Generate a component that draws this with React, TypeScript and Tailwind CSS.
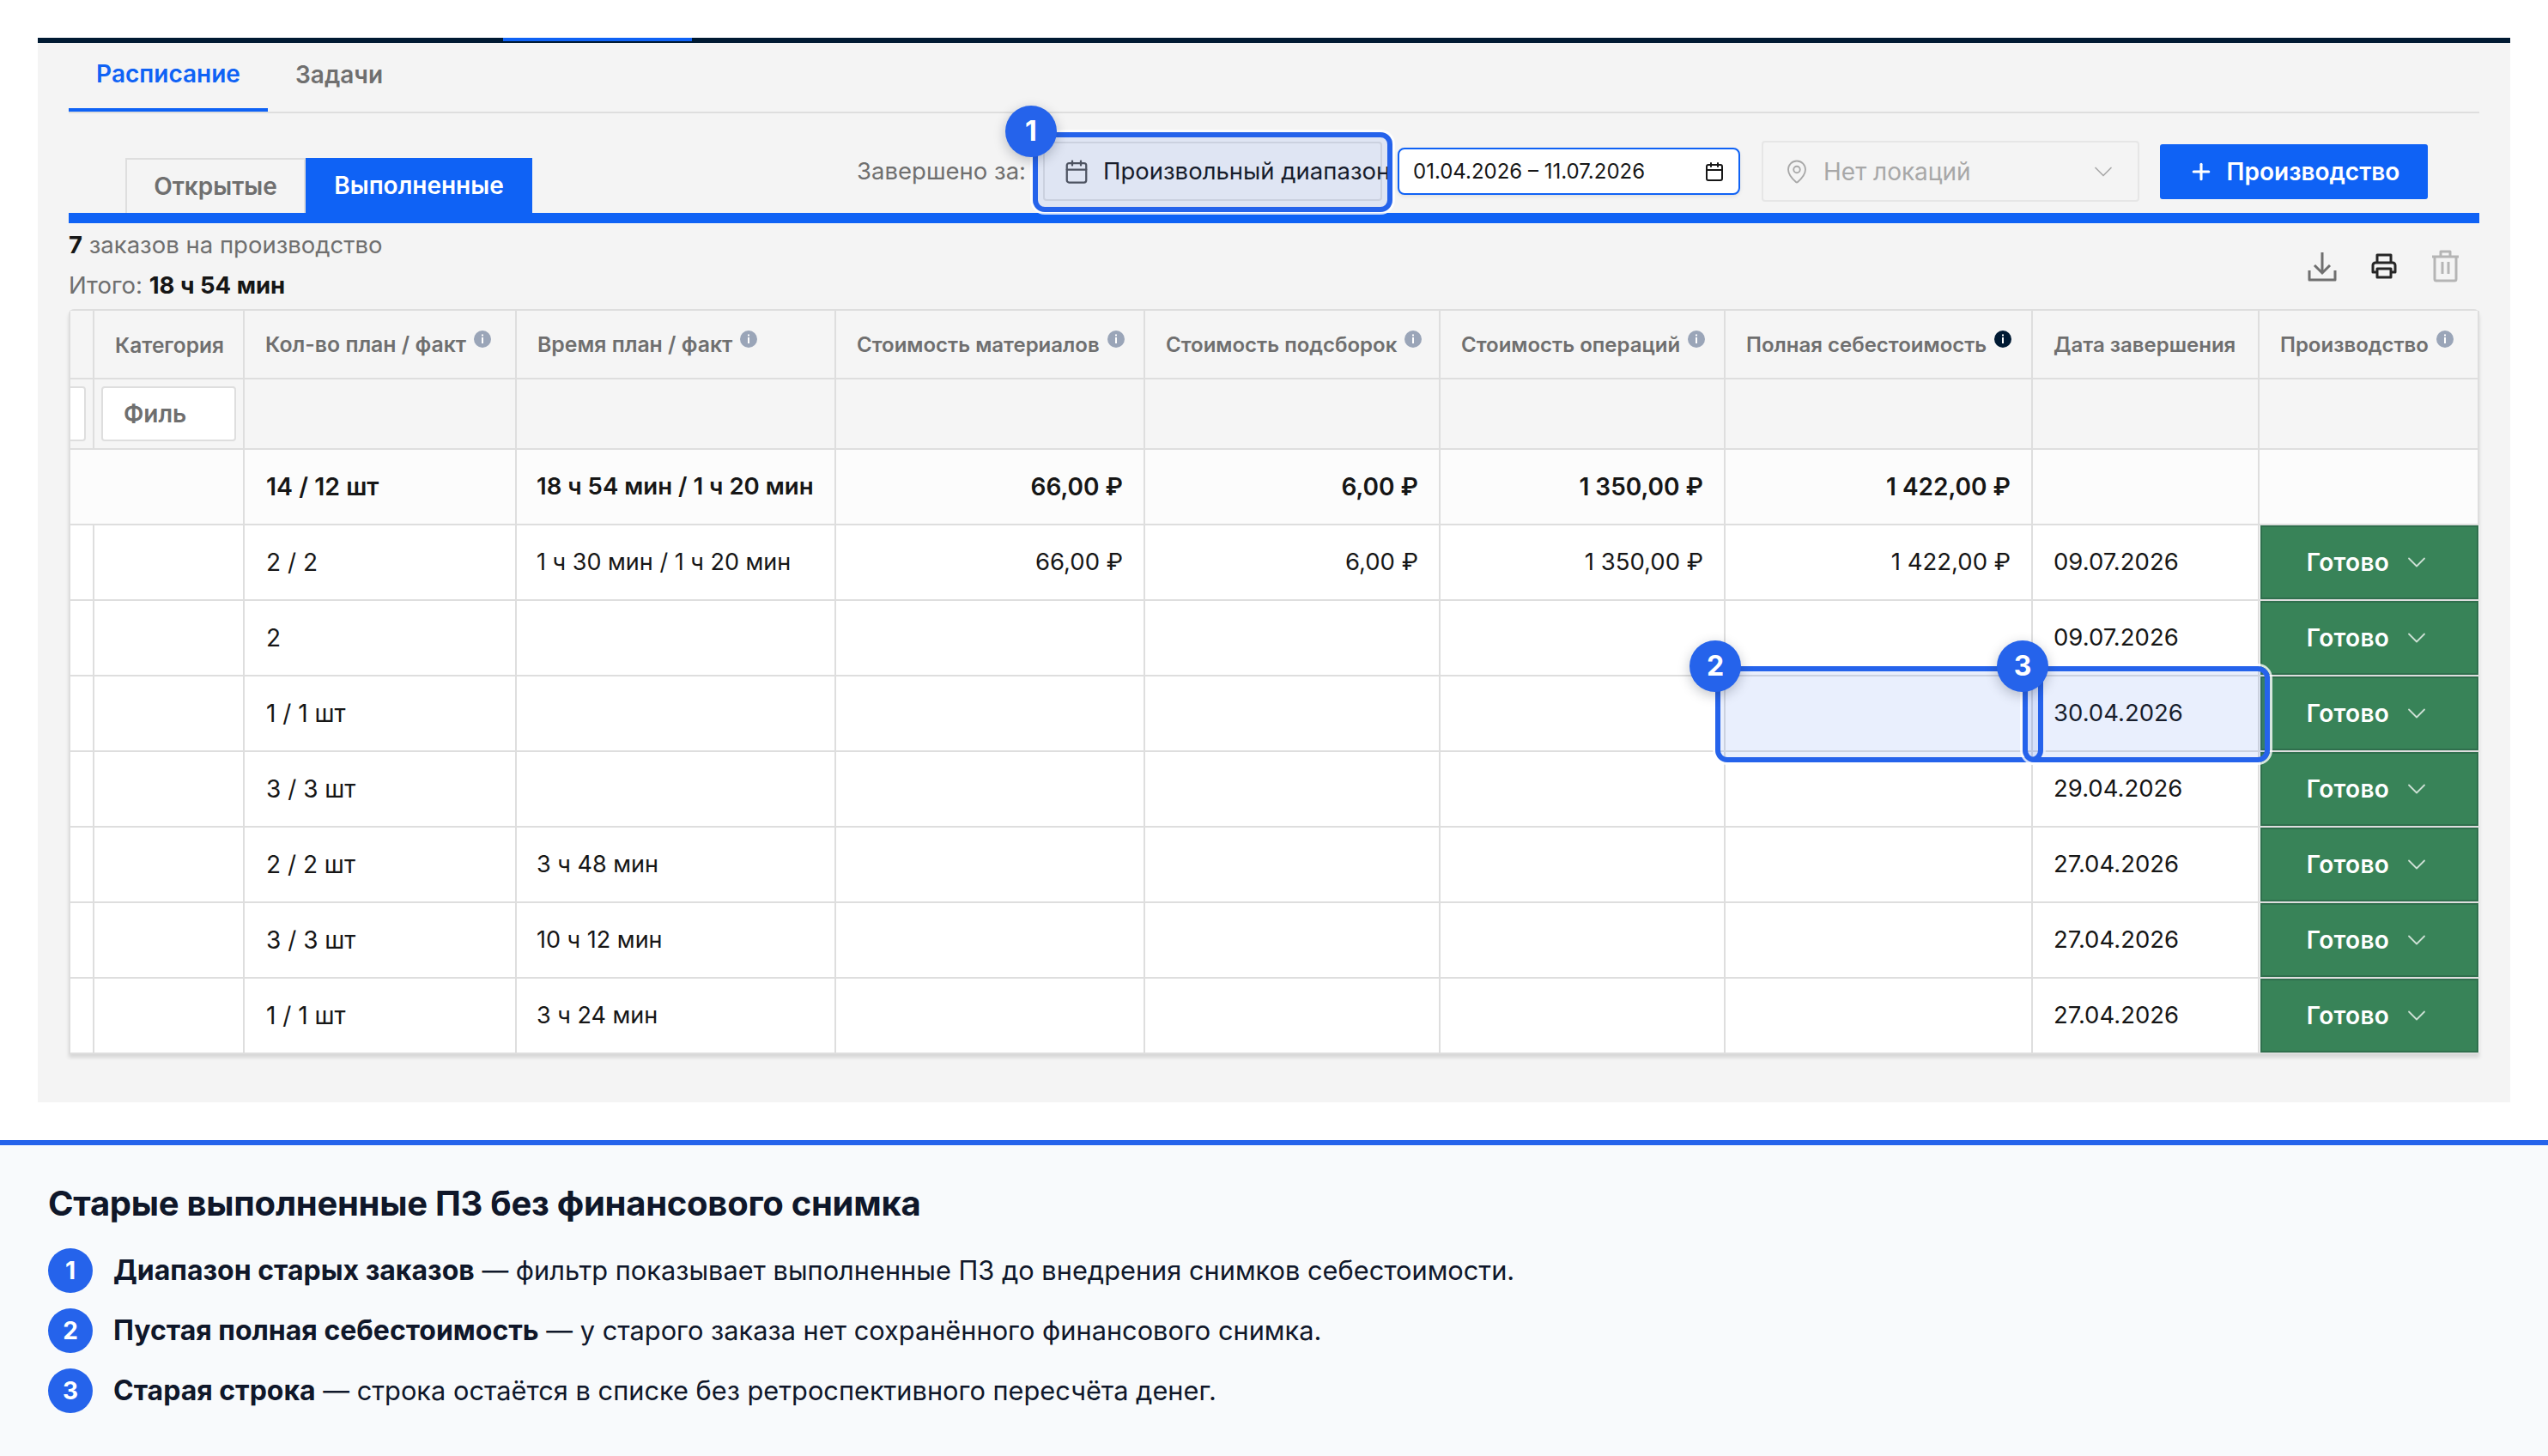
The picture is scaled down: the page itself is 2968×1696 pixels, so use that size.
import React from 'react';
import { Calendar, MapPin, ChevronDown, Plus } from 'lucide-react';

const gridCols = 'grid grid-cols-[28px_175px_317px_372px_360px_344px_332px_358px_264px_256px]';
const cellBase = 'flex items-center border-r-2 border-b-2 border-[#dedede] min-w-0';

const Badge = ({ n, className }: { n: number; className: string }) => (
  <div className={`absolute z-20 w-[60px] h-[60px] rounded-full bg-[#2563eb] text-white flex items-center justify-center text-[32px] font-bold shadow-[0_4px_14px_rgba(15,23,42,0.25)] ${className}`}>
    {n}
  </div>
);

const Highlight = ({ n, badge, className }: { n: number; badge: string; className: string }) => (
  <div className={`absolute z-10 rounded-[14px] border-[6px] border-[#2563eb] bg-[#2563eb]/10 shadow-[0_0_0_3px_rgba(255,255,255,0.8)] ${className}`}>
    <Badge n={n} className={badge} />
  </div>
);

const InfoDot = ({ dark }: { dark?: boolean }) => (
  <svg width="20" height="20" viewBox="0 0 20 20" className="shrink-0 ml-[9px] -mt-[14px]">
    <circle cx="10" cy="10" r="10" fill={dark ? '#001a33' : '#9aa5b8'} />
    <rect x="9" y="8" width="2" height="7" fill="#fff" />
    <rect x="9" y="4.5" width="2" height="2" fill="#fff" />
  </svg>
);

const headers = [
  { t: 'Кол-во план / факт', info: true, cls: 'text-[24.8px]' },
  { t: 'Время план / факт', info: true, cls: 'text-[24.8px]' },
  { t: 'Стоимость материалов', info: true, cls: '' },
  { t: 'Стоимость подсборок', info: true, cls: '' },
  { t: 'Стоимость операций', info: true, cls: '' },
  { t: 'Полная себестоимость', info: true, dark: true, cls: '' },
  { t: 'Дата завершения', info: false, cls: '' },
  { t: 'Производство', info: true, cls: '' },
];

const rows = [
  { qty: '2 / 2', time: '1 ч 30 мин / 1 ч 20 мин', mat: '66,00 ₽', sub: '6,00 ₽', ops: '1 350,00 ₽', full: '1 422,00 ₽', date: '09.07.2026' },
  { qty: '2', time: '', mat: '', sub: '', ops: '', full: '', date: '09.07.2026' },
  { qty: '1 / 1 шт', time: '', mat: '', sub: '', ops: '', full: '', date: '30.04.2026', mark: true },
  { qty: '3 / 3 шт', time: '', mat: '', sub: '', ops: '', full: '', date: '29.04.2026' },
  { qty: '2 / 2 шт', time: '3 ч 48 мин', mat: '', sub: '', ops: '', full: '', date: '27.04.2026' },
  { qty: '3 / 3 шт', time: '10 ч 12 мин', mat: '', sub: '', ops: '', full: '', date: '27.04.2026' },
  { qty: '1 / 1 шт', time: '3 ч 24 мин', mat: '', sub: '', ops: '', full: '', date: '27.04.2026' },
];

const notes = [
  { b: 'Диапазон старых заказов', t: ' — фильтр показывает выполненные ПЗ до внедрения снимков себестоимости.' },
  { b: 'Пустая полная себестоимость', t: ' — у старого заказа нет сохранённого финансового снимка.' },
  { b: 'Старая строка', t: ' — строка остаётся в списке без ретроспективного пересчёта денег.' },
];

export default function App() {
  return (
    <div className="w-[2968px] h-[1696px] bg-white flex flex-col pt-[44px] font-['Inter',sans-serif] text-[27px] text-[#161616] overflow-hidden">
      {/* Панель приложения */}
      <div className="relative mx-[44px] w-[2880px] h-[1240px] shrink-0 bg-[#f4f4f4] border-t-[6px] border-[#001a33] px-[36px]">
        <div className="absolute left-[542px] -top-[6px] w-[220px] h-1 bg-[#0f62f5]" />

        {/* Вкладки */}
        <div className="flex h-[82px] border-b-2 border-[#dedede] text-[28px]">
          <div className="w-[232px] h-[80px] border-b-4 border-[#0f62f5] text-[#0f62f5] font-semibold flex items-center justify-center pb-[4px]">Расписание</div>
          <div className="pl-[32px] text-[#6f6f6f] font-semibold flex items-center pb-[6px]">Задачи</div>
        </div>

        {/* Фильтры */}
        <div className="flex justify-between box-content h-[116px] border-b-[12px] border-[#0f62f5]">
          <div className="flex self-end pl-[66px] text-[28px]">
            <div className="w-[210px] h-[64px] border-2 border-b-0 border-[#dedede] text-[#6f6f6f] font-semibold flex items-center justify-center">Открытые</div>
            <div className="w-[264px] h-[64px] bg-[#0f62f5] text-white font-semibold flex items-center justify-center">Выполненные</div>
          </div>
          <div className="flex items-center h-[71px] mt-[32px] mr-[60px]">
            <span className="text-[#6f6f6f] text-[27.5px] mr-[20px]">Завершено за:</span>
            <div className="relative w-[395px] h-[69px] mr-[18px] flex items-center bg-[#f4f4f4] border-2 border-[#dedede] rounded-[4px] pl-[22px]">
              <Calendar size={30} strokeWidth={1.8} className="text-[#525252] shrink-0" />
              <span className="ml-[16px] text-[27.5px] text-[#161616] whitespace-nowrap">Произвольный диапазон</span>
              <Highlight n={1} badge="-left-[38px] -top-[37px]" className="-top-[13px] -bottom-[15px] -left-[14px] -right-[14px]" />
            </div>
            <div className="w-[399px] h-[55px] bg-white border-2 border-[#0f62f5] rounded-[8px] shadow-[0_2px_4px_rgba(0,0,0,0.08)] flex items-center justify-between pl-[16px] pr-[16px] mr-[25px] text-[24px]">
              <span>01.04.2026 – 11.07.2026</span>
              <Calendar size={24} strokeWidth={2} />
            </div>
            <div className="w-[440px] h-[71px] border-2 border-[#e6e6e6] rounded-[4px] flex items-center justify-between pl-[24px] pr-[22px] text-[28px] text-[#a8a8a8] mr-[24px]">
              <span className="flex items-center">
                <MapPin size={30} strokeWidth={1.5} className="mr-[16px]" />
                Нет локаций
              </span>
              <ChevronDown size={36} strokeWidth={1.1} />
            </div>
            <div className="w-[312px] h-[64px] bg-[#0f62f5] rounded-[3px] text-white text-[28px] font-semibold flex items-center justify-center">
              <Plus size={30} strokeWidth={2.5} className="mr-[15px]" />
              Производство
            </div>
          </div>
        </div>

        {/* Сводка и действия */}
        <div className="flex justify-between h-[100px]">
          <div className="leading-[47px] pt-[2px] text-[27.5px]">
            <div className="text-[#6f6f6f]"><b className="text-[#161616]">7</b> заказов на производство</div>
            <div className="text-[#6f6f6f]">Итого: <b className="text-[#161616]">18 ч 54 мин</b></div>
          </div>
          <div className="flex items-start gap-[40px] pt-[34px] pr-[23px]">
            <svg width="34" height="34" viewBox="0 0 34 34" fill="none" stroke="#6f6f6f" strokeWidth="3">
              <path d="M17 0v24M8 15l9 9 9-9" />
              <path d="M2 21v11h30V21" strokeLinejoin="round" />
            </svg>
            <svg width="30" height="30" viewBox="0 0 30 30" fill="none" stroke="#262626" strokeWidth="3" strokeLinejoin="round" className="mt-[1px]">
              <path d="M7 11V2h16v9" />
              <path d="M7 22H2V14a3 3 0 0 1 3-3h20a3 3 0 0 1 3 3v8h-5" />
              <path d="M7 18h16v10H7z" />
            </svg>
            <svg width="33" height="38" viewBox="0 0 33 38" fill="none" stroke="#b5b5b5" strokeWidth="3" strokeLinejoin="round" className="-mt-[3px]">
              <path d="M1 8h31M11 7V2h11v5" />
              <path d="M4 8v26a2 2 0 0 0 2 2h21a2 2 0 0 0 2-2V8" />
              <path d="M13 14v14M20 14v14" />
            </svg>
          </div>
        </div>

        {/* Таблица */}
        <div className="w-[2808px] bg-white border-t-2 border-l-2 border-[#dedede] rounded-t-[6px] shadow-[0_4px_4px_rgba(0,0,0,0.12)]">
          <div className={`${gridCols} h-[80px] bg-[#f5f5f5] text-[24px] font-semibold text-[#6f6f6f]`}>
            <div className={cellBase} />
            <div className={`${cellBase} pl-[24px] pt-[2px] text-[24.5px]`}>Категория</div>
            {headers.map((h) => (
              <div key={h.t} className={`${cellBase} pl-[24px] pt-[2px] whitespace-nowrap ${h.cls}`}>
                {h.t}
                {h.info && <InfoDot dark={h.dark} />}
              </div>
            ))}
          </div>

          <div className={`${gridCols} h-[82px] bg-[#f5f5f5]`}>
            <div className={`${cellBase}`}>
              <div className="w-[18px] h-[64px] bg-white border-2 border-l-0 border-[#dedede] rounded-r-[4px]" />
            </div>
            <div className={`${cellBase} pl-[8px]`}>
              <div className="w-[157px] h-[64px] bg-white border-2 border-[#dedede] rounded-[4px] flex items-center pl-[24px] text-[28px] font-semibold text-[#6f6f6f]">Филь</div>
            </div>
            {headers.map((h) => <div key={h.t} className={cellBase} />)}
          </div>

          <div className={`${gridCols} h-[88px] bg-[#fcfcfc] font-semibold text-[27.6px]`}>
            <div className={`${cellBase} col-span-2`} />
            <div className={`${cellBase} pl-[25px] text-[28.5px]`}>14 / 12 шт</div>
            <div className={`${cellBase} pl-[23px]`}>18 ч 54 мин / 1 ч 20 мин</div>
            <div className={`${cellBase} justify-end pr-[24px] text-[28px]`}>66,00 ₽</div>
            <div className={`${cellBase} justify-end pr-[24px] text-[28px]`}>6,00 ₽</div>
            <div className={`${cellBase} justify-end pr-[24px] text-[28px]`}>1 350,00 ₽</div>
            <div className={`${cellBase} justify-end pr-[24px] text-[28px]`}>1 422,00 ₽</div>
            <div className={cellBase} />
            <div className={cellBase} />
          </div>

          {rows.map((r, i) => (
            <div key={i} className={`${gridCols} h-[88px]`}>
              <div className={cellBase} />
              <div className={cellBase} />
              <div className={`${cellBase} pl-[25px] text-[28px]`}>{r.qty}</div>
              <div className={`${cellBase} pl-[23px]`}>{r.time}</div>
              <div className={`${cellBase} justify-end pr-[24px] text-[27.5px]`}>{r.mat}</div>
              <div className={`${cellBase} justify-end pr-[24px] text-[27.5px]`}>{r.sub}</div>
              <div className={`${cellBase} justify-end pr-[24px] text-[27.5px]`}>{r.ops}</div>
              <div className={`${cellBase} justify-end pr-[24px] text-[27.5px] relative`}>
                {r.full}
                {r.mark && <Highlight n={2} badge="-left-[36px] -top-[36px]" className="-top-3 -bottom-[14px] -left-3 -right-[14px]" />}
              </div>
              <div className={`${cellBase} pl-[24px] text-[27.5px] relative`}>
                {r.date}
                {r.mark && <Highlight n={3} badge="-left-[36px] -top-[36px]" className="-top-3 -bottom-[14px] -left-3 -right-[14px]" />}
              </div>
              <div className="px-[1px] pb-[2px] bg-white shadow-[inset_0_-2px_0_#dedede]">
                <div className="h-full flex items-center justify-center border-2 border-[#2f6f4d] bg-[#388358] text-white text-[28px] font-semibold tracking-[0.3px]">
                  Готово
                  <ChevronDown size={36} strokeWidth={1.2} className="ml-[14px] text-white/75" />
                </div>
              </div>
            </div>
          ))}
        </div>
      </div>

      {/* Легенда */}
      <div className="mt-[44px] flex-1 bg-[#f8fafc] border-t-[6px] border-[#2563eb] pl-[56px] pt-[46px] text-[#0f172a]">
        <h2 className="text-[40px] leading-[44px] font-bold tracking-[-0.27px]">Старые выполненные ПЗ без финансового снимка</h2>
        <div className="mt-[30px] flex flex-col gap-[18px]">
          {notes.map((n, i) => (
            <div key={n.b} className="flex items-center h-[52px]">
              <div className="w-[52px] h-[52px] rounded-full bg-[#2563eb] text-white font-bold text-[28px] flex items-center justify-center shrink-0">{i + 1}</div>
              <div className="ml-[24px] text-[30.75px]"><b className="text-[32px]">{n.b}</b>{n.t}</div>
            </div>
          ))}
        </div>
      </div>
    </div>
  );
}
